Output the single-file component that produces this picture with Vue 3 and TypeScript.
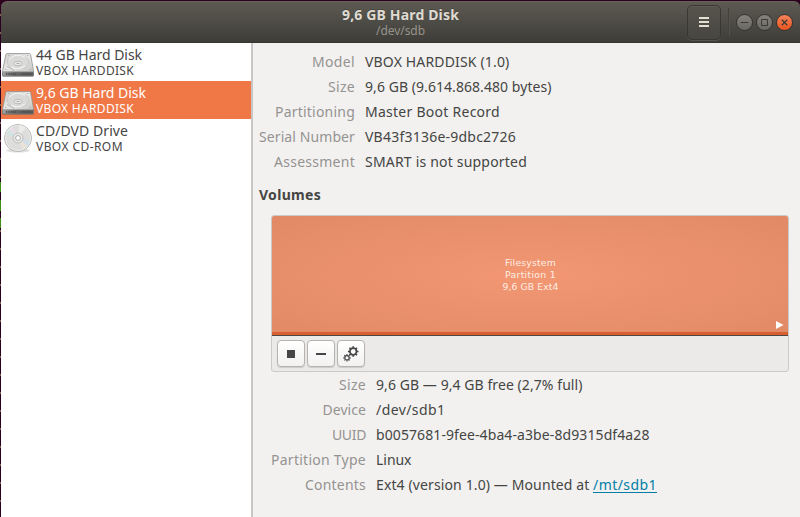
<script setup lang="ts">
interface Device {
  name: string
  nameWidth: number
  model: string
  modelWidth: number
  kind: 'disk' | 'optical'
  selected?: boolean
}

interface Field {
  label: string
  labelWidth: number
  value: string
  valueWidth: number
  link?: string
}

const devices: Device[] = [
  { name: '44 GB Hard Disk', nameWidth: 106, model: 'VBOX HARDDISK', modelWidth: 98, kind: 'disk' },
  { name: '9,6 GB Hard Disk', nameWidth: 110, model: 'VBOX HARDDISK', modelWidth: 98, kind: 'disk', selected: true },
  { name: 'CD/DVD Drive', nameWidth: 92, model: 'VBOX CD-ROM', modelWidth: 87, kind: 'optical' },
]

const driveFields: Field[] = [
  { label: 'Model', labelWidth: 43, value: 'VBOX HARDDISK (1.0)', valueWidth: 144.5 },
  { label: 'Size', labelWidth: 27, value: '9,6 GB (9.614.868.480 bytes)', valueWidth: 186.5 },
  { label: 'Partitioning', labelWidth: 80, value: 'Master Boot Record', valueWidth: 135 },
  { label: 'Serial Number', labelWidth: 96, value: 'VB43f3136e-9dbc2726', valueWidth: 151 },
  { label: 'Assessment', labelWidth: 81, value: 'SMART is not supported', valueWidth: 162 },
]

const volumeFields: Field[] = [
  { label: 'Size', labelWidth: 27, value: '9,6 GB — 9,4 GB free (2,7% full)', valueWidth: 206.5 },
  { label: 'Device', labelWidth: 43.5, value: '/dev/sdb1', valueWidth: 69.5 },
  { label: 'UUID', labelWidth: 34, value: 'b0057681-9fee-4ba4-a3be-8d9315df4a28', valueWidth: 273.5 },
  { label: 'Partition Type', labelWidth: 95, value: 'Linux', valueWidth: 35.5 },
  { label: 'Contents', labelWidth: 61, value: 'Ext4 (version 1.0) — Mounted at', valueWidth: 213.5, link: '/mt/sdb1' },
]

// Tracks a line of text so that it fills the given width in pixels.
const vFit = {
  mounted(el: HTMLElement, binding: { value: number }) {
    const natural = el.getBoundingClientRect().width
    const count = (el.textContent ?? '').length
    const spacing = (binding.value - natural) / count
    el.style.letterSpacing = `${spacing.toFixed(3)}px`
  },
}

const teeth = [0, 45, 90, 135, 180, 225, 270, 315]
</script>

<template>
  <div class="desktop">
    <div class="window">
      <header class="titlebar">
        <div class="titles">
          <div class="title"><span v-fit="117">9,6 GB Hard Disk</span></div>
          <div class="subtitle"><span v-fit="49">/dev/sdb</span></div>
        </div>
        <div class="controls">
          <button class="menu" aria-label="Menu">
            <svg width="10" height="10" viewBox="0 0 10 10"><path d="M0 0h10v2H0zM0 4h10v2H0zM0 8h10v2H0z" fill="#e4dfd3" /></svg>
          </button>
          <i class="divider"></i>
          <button class="round" aria-label="Minimize">
            <svg width="15" height="15" viewBox="0 0 15 15"><path d="M3.500 7.500h8" /></svg>
          </button>
          <button class="round" aria-label="Maximize">
            <svg width="15" height="15" viewBox="0 0 15 15"><path d="M4.500 4.500h6v6h-6z" /></svg>
          </button>
          <button class="round close" aria-label="Close">
            <svg width="15" height="15" viewBox="0 0 15 15"><path d="M4.800 4.800l5.400 5.400M10.200 4.800l-5.400 5.400" stroke-width="1.300" /></svg>
          </button>
        </div>
      </header>

      <div class="body">
        <nav class="sidebar">
          <div v-for="(d, i) in devices" :key="i" class="device" :class="{ selected: d.selected }">
            <svg v-if="d.kind === 'disk'" class="icon" width="34" height="32" viewBox="0 0 34 32">
              <defs>
                <linearGradient :id="`top${i}`" x1="0" y1="0" x2="1" y2="1">
                  <stop offset="0" stop-color="#cfcfcd" /><stop offset=".5" stop-color="#e6e6e5" /><stop offset="1" stop-color="#c6c6c5" />
                </linearGradient>
                <linearGradient :id="`front${i}`" x1="0" y1="0" x2="1" y2="0">
                  <stop offset="0" stop-color="#a4a4a3" /><stop offset=".4" stop-color="#666" /><stop offset="1" stop-color="#5a5a5a" />
                </linearGradient>
              </defs>
              <path d="M1 25h32v2.700q0 1-1.500 1H2.500q-1.500 0-1.500-1z" fill="#555" opacity=".5" />
              <path d="M1.500 23.500h31v3.500q0 1-1.200 1H2.700q-1.200 0-1.200-1z" :fill="`url(#front${i})`" stroke="#7a7a79" stroke-width=".7" />
              <path d="M6 5.500h22.300q1 0 1.300 1l2.900 16q.2 1.300-1.200 1.300H2.700q-1.300 0-1-1.300l3.100-16q.3-1 1.200-1z" :fill="`url(#top${i})`" stroke="#949492" stroke-width=".8" />
              <ellipse cx="17" cy="14" rx="11" ry="7" fill="#d9d9d8" stroke="#c0c0be" stroke-width=".7" />
              <path d="M8 11.500q3.500-4.200 9-4.200 4 0 7 2M10 19q7 4 14-1" fill="none" stroke="#f5f5f4" stroke-width="1.100" />
              <ellipse cx="17" cy="15.500" rx="4" ry="2.300" fill="#e9e9e8" stroke="#b2b2b0" stroke-width=".8" />
              <path d="M15.500 15.500h3" stroke="#a9a9a8" />
              <path d="M6 18.500l5 2.500 2 1.500M7 7.500h1.500M26 7.500h1.500M4 21.500h1.500M28.500 21.500H30" fill="none" stroke="#aaaaa8" stroke-width=".8" />
              <path d="M5 26h10" stroke="#444" stroke-width="1.500" stroke-dasharray="1 .7" />
              <path d="M20 26h10" stroke="#484848" stroke-width="1.200" opacity=".6" />
            </svg>
            <svg v-else class="icon" width="34" height="32" viewBox="0 0 34 32">
              <ellipse cx="17" cy="26.500" rx="12" ry="2" fill="#ccc" opacity=".6" />
              <circle cx="17" cy="14" r="13.500" fill="#dddddc" stroke="#aeaeac" stroke-width=".9" />
              <path d="M17 14L4.500 10A13 13 0 0 1 8 4.500z" fill="#d3e3e2" />
              <path d="M17 14L8 4.500A13 13 0 0 1 12 2z" fill="#eadde8" />
              <path d="M17 14L29.500 16.500A13 13 0 0 1 26.500 22.500z" fill="#d2dfe8" />
              <path d="M17 14L26.500 22.500A13 13 0 0 1 22 26z" fill="#e9e2d6" />
              <path d="M17 14L18 1A13 13 0 0 1 25 3.500z" fill="#ebebea" />
              <circle cx="17" cy="14" r="12.600" fill="none" stroke="#efefee" stroke-width=".8" />
              <circle cx="17" cy="14" r="5" fill="#e8e8e7" stroke="#bbbbb9" stroke-width=".9" />
              <circle cx="17" cy="14" r="2.400" fill="#fff" stroke="#aaaaa8" stroke-width="1" />
            </svg>
            <div class="device-text">
              <div class="device-name"><span v-fit="d.nameWidth">{{ d.name }}</span></div>
              <div class="device-model"><span v-fit="d.modelWidth">{{ d.model }}</span></div>
            </div>
          </div>
        </nav>

        <main class="details">
          <dl class="fields drive">
            <template v-for="f in driveFields" :key="f.label">
              <dt><span v-fit="f.labelWidth">{{ f.label }}</span></dt>
              <dd><span v-fit="f.valueWidth">{{ f.value }}</span></dd>
            </template>
          </dl>

          <h2><span v-fit="62">Volumes</span></h2>

          <section class="volume">
            <div class="partition">
              <div class="caption"><span v-fit="51">Filesystem</span></div>
              <div class="caption"><span v-fit="51">Partition 1</span></div>
              <div class="caption"><span v-fit="56">9,6 GB Ext4</span></div>
              <svg class="mounted" width="8" height="8" viewBox="0 0 8 8"><path d="M0 0L7.500 4L0 8z" fill="#fff" /></svg>
            </div>
            <div class="toolbar">
              <button aria-label="Unmount">
                <svg width="16" height="16" viewBox="0 0 16 16"><path d="M4 4h8v8H4z" fill="#464646" /></svg>
              </button>
              <button aria-label="Delete partition">
                <svg width="16" height="16" viewBox="0 0 16 16"><path d="M3 7h10v2H3z" fill="#464646" /></svg>
              </button>
              <button aria-label="More actions">
                <svg width="16" height="16" viewBox="0 0 16 16" fill="none" stroke="#464646">
                  <circle cx="10.200" cy="5.500" r="3.300" stroke-width="1.800" />
                  <path v-for="t in teeth" :key="`a${t}`" d="M10.200 1.700V.200" stroke-width="1.700" :transform="`rotate(${t} 10.200 5.500)`" />
                  <circle cx="4" cy="11.800" r="2.200" stroke-width="1.200" />
                  <path v-for="t in teeth" :key="`b${t}`" d="M4 9.300V8.100" stroke-width="1.200" :transform="`rotate(${t} 4 11.800)`" />
                </svg>
              </button>
            </div>
          </section>

          <dl class="fields contents">
            <template v-for="f in volumeFields" :key="f.label">
              <dt><span v-fit="f.labelWidth">{{ f.label }}</span></dt>
              <dd>
                <span v-fit="f.valueWidth">{{ f.value }}</span>
                <a v-if="f.link" v-fit="64">{{ f.link }}</a>
              </dd>
            </template>
          </dl>
        </main>
      </div>
    </div>
  </div>
</template>

<style>
body {
  margin: 0;
  overflow: hidden;
}
</style>

<style scoped>
* {
  box-sizing: border-box;
}
.desktop {
  width: 800px;
  height: 517px;
  padding: 1px 0 0 1px;
  background:
    linear-gradient(#0000 182px, #3f8f16 182px 192px, #2c001e 192px 200px, #3f8f16 200px 211px, #2c001e 211px 218px, #3f8f16 218px 228px, #0000 228px) 0 0 / 1px 100% no-repeat,
    repeating-linear-gradient(#0000 0 14px, #7d6558 14px 16px, #0000 16px 18px) 0 0 / 1px 100% no-repeat,
    #2c001e;
  font-family: "Noto Sans", "Open Sans", sans-serif;
  font-size: 14px;
  color: #454543;
  white-space: nowrap;
}
.window {
  height: 516px;
  display: flex;
  flex-direction: column;
}
.titlebar {
  height: 42px;
  flex: none;
  display: grid;
  border-radius: 6px 6px 0 0;
  background: linear-gradient(#5d5a52, #3e3d39);
  border-top: 1px solid #65625b;
  border-bottom: 1px solid #373632;
}
.titles,
.controls {
  grid-area: 1 / 1;
}
.titles {
  display: flex;
  flex-direction: column;
  align-items: center;
  padding-top: 4px;
}
.title span,
.subtitle span,
.device-name span,
.device-model span,
.caption span {
  display: inline-block;
  vertical-align: top;
}
.title {
  height: 17px;
  line-height: 17px;
  font-size: 14px;
  font-weight: 700;
  color: #dfdbd2;
  text-shadow: 0 -1px #0003;
}
.subtitle {
  height: 14px;
  line-height: 15px;
  font-size: 12px;
  color: #96938b;
}
.controls {
  display: flex;
  justify-content: flex-end;
  align-items: center;
  padding-right: 7px;
}
button {
  display: flex;
  align-items: center;
  justify-content: center;
  padding: 0;
  margin: 0;
}
button svg {
  display: block;
}
.menu {
  width: 34px;
  height: 35px;
  border: 1px solid #383732;
  border-radius: 5px;
  background: linear-gradient(#57544d, #474640);
  box-shadow: inset 0 1px #605d56, 0 1px #57554d;
}
.divider {
  width: 2px;
  height: 28px;
  margin: 0 3px 0 7px;
  background: #44423d;
  border-right: 1px solid #555249;
}
.round {
  width: 17px;
  height: 17px;
  margin-left: 3px;
  border: 1px solid #34332f;
  border-radius: 50%;
  background: linear-gradient(#85827b, #6a6862);
}
.round svg {
  flex: none;
  fill: none;
  stroke: #3c3b37;
}
.close {
  background: linear-gradient(#f5835a, #e9541f);
}
.body {
  flex: 1;
  display: flex;
}
.sidebar {
  width: 252px;
  flex: none;
  background: #fff;
  border-right: 2px solid #c9c7c5;
}
.device {
  height: 38px;
  display: flex;
}
.device.selected {
  background: #f07746;
  color: #fff;
}
.icon {
  flex: none;
  margin-top: 5px;
}
.device-text {
  padding: 3px 0 0 1px;
}
.device-name {
  height: 17px;
  line-height: 17px;
}
.device-model {
  height: 15px;
  line-height: 15px;
  font-size: 12px;
}
.details {
  flex: 1;
  background: #f2f1f0;
  padding: 7px 11px 0 6px;
}
.fields {
  margin: 0;
  display: grid;
  grid-auto-rows: 25px;
  column-gap: 10px;
  line-height: 24px;
}
.drive {
  grid-template-columns: 96px 1fr;
}
.contents {
  grid-template-columns: 107px 1fr;
  padding-top: 1px;
}
dt {
  color: #959390;
  display: flex;
  justify-content: flex-end;
}
dd {
  margin: 0;
  display: flex;
}
dd a {
  align-self: flex-start;
  height: 20px;
  margin-left: 3.5px;
  color: #007ea7;
  border-bottom: 1px solid #007ea7;
}
h2 {
  margin: 8px 0 0;
  height: 32px;
  font-size: 14px;
  line-height: 24px;
  font-weight: 700;
}
.volume {
  width: 518px;
  height: 157px;
  margin-left: 12px;
  border: 1px solid #cccac8;
  border-radius: 3px;
  background: #ebeae8;
  overflow: hidden;
}
.partition {
  position: relative;
  height: 120px;
  padding: 41px 0 0 1px;
  background: radial-gradient(ellipse at center, #f39773 0, #e18965 100%);
  border-bottom: 1px solid #4d4845;
  box-shadow: inset 0 -3px #d85f2f;
  font-family: "DejaVu Sans", sans-serif;
  font-size: 9.3px;
  color: #ffeee4;
}
.caption {
  height: 12px;
  line-height: 12px;
  text-align: center;
}
.mounted {
  position: absolute;
  right: 4px;
  bottom: 6px;
}
.toolbar {
  display: flex;
  gap: 2px;
  padding: 4px 5px;
}
.toolbar button {
  width: 28px;
  height: 27px;
  border: 1px solid #b6b3af;
  border-radius: 4px;
  background: linear-gradient(#fff, #f3f2f1);
  box-shadow: 0 1px 1px #0002;
}
</style>
